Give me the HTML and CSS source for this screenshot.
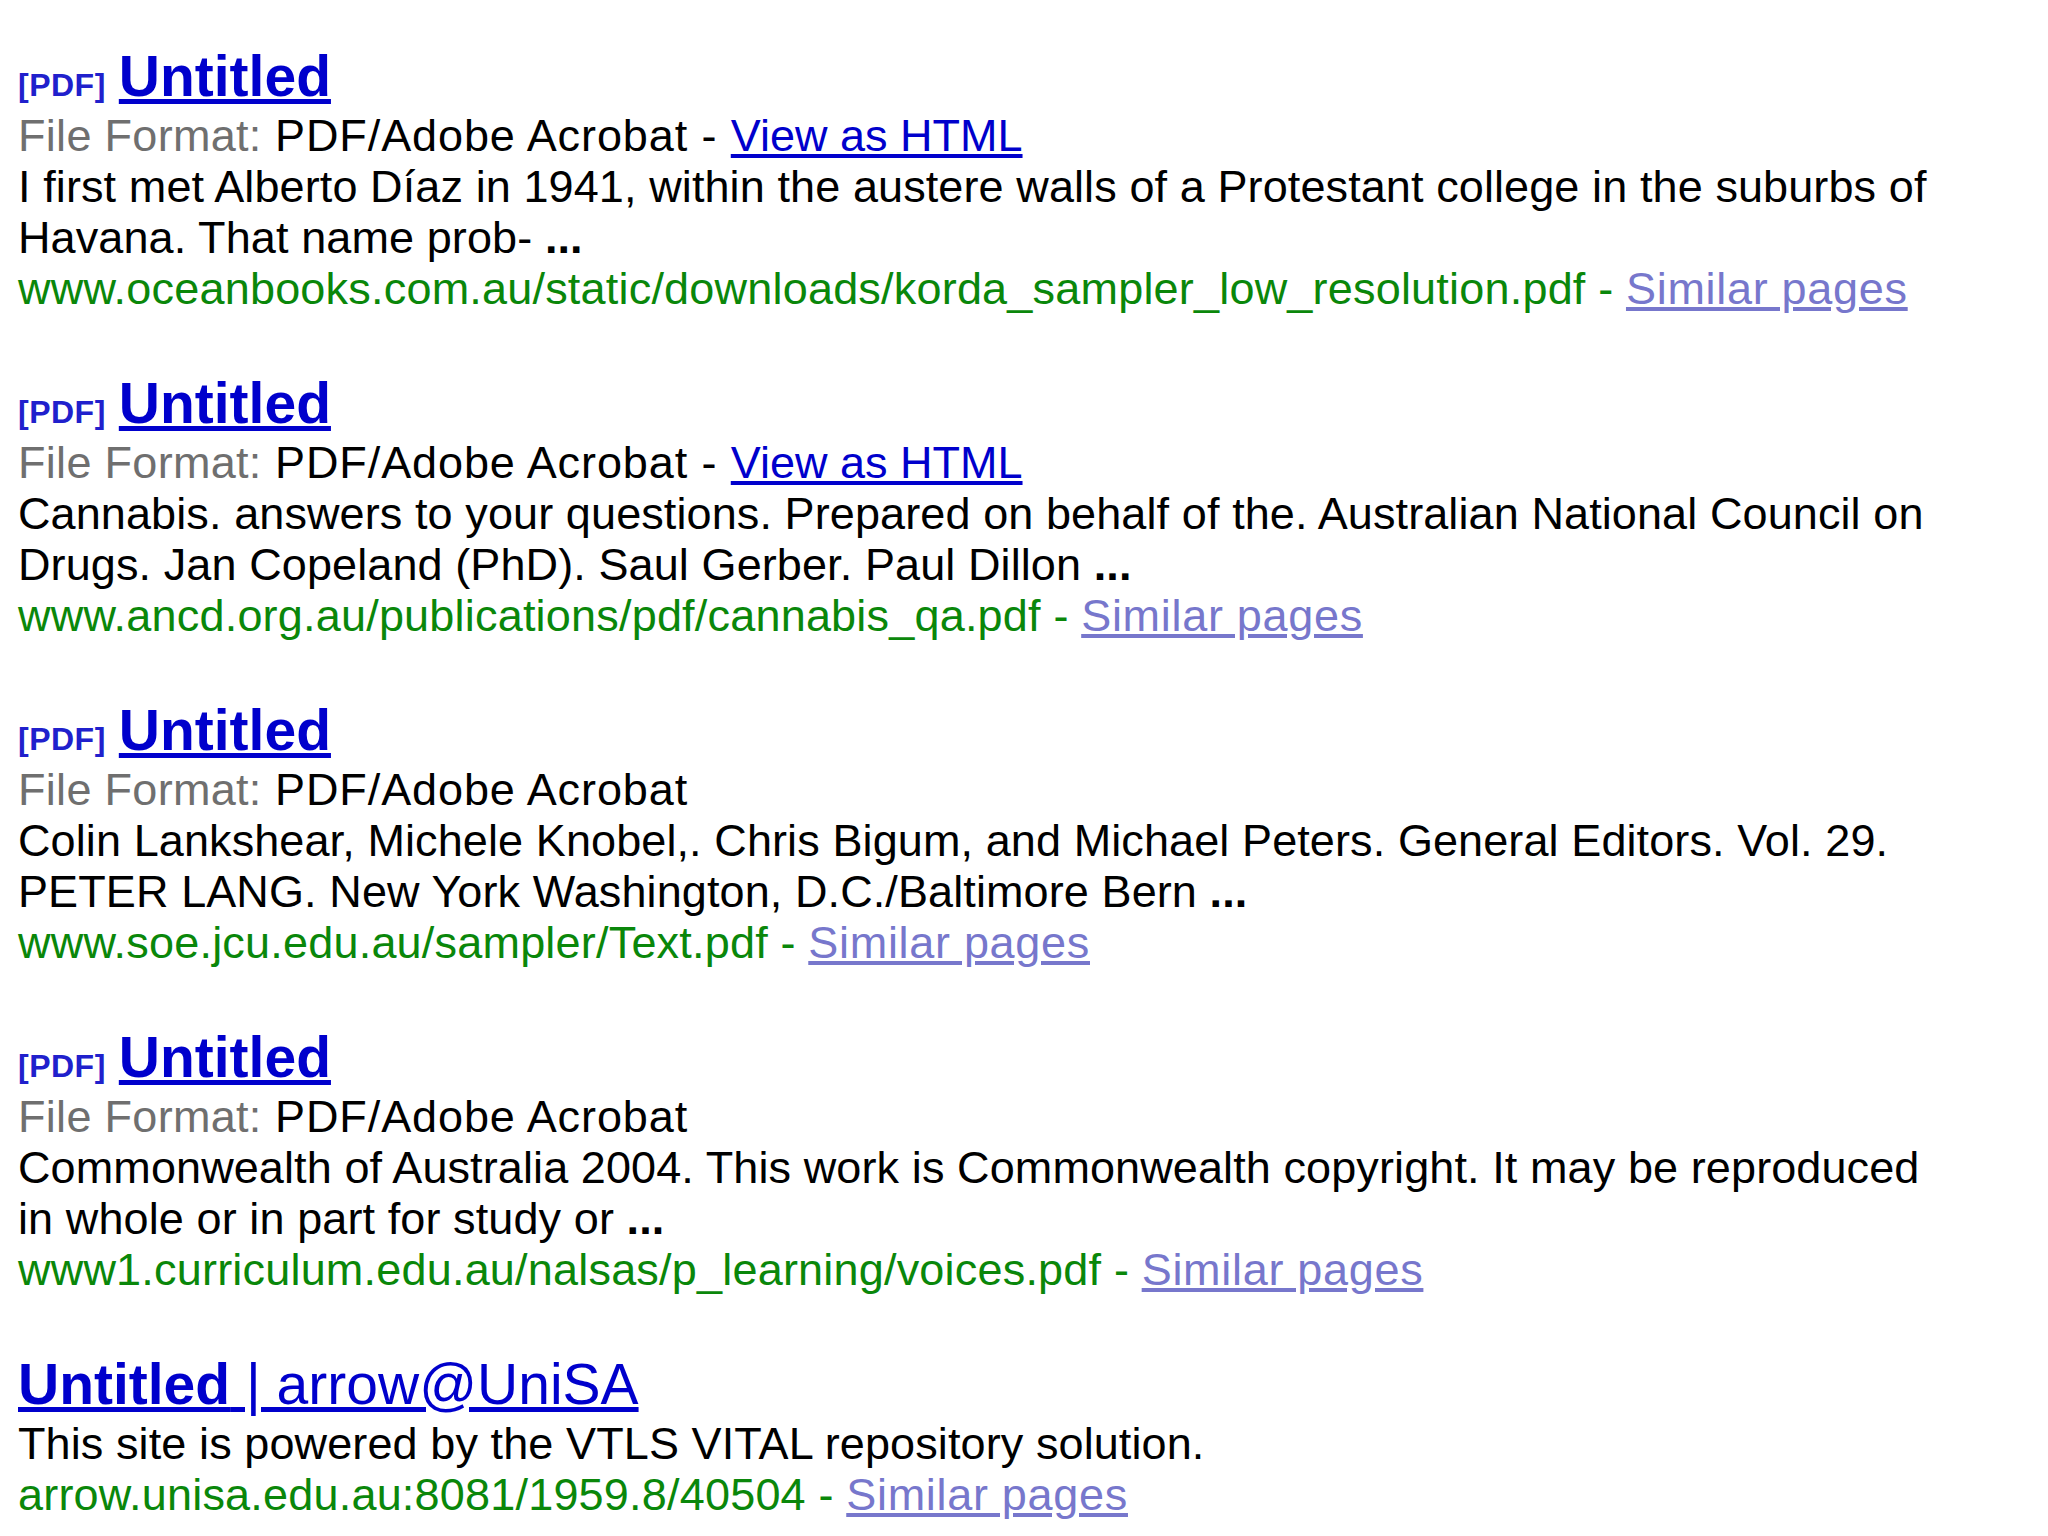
FILE: index.html
```html
<!DOCTYPE html>
<html lang="en">
<head>
<meta charset="utf-8">
<title>Untitled - results</title>
<link rel="stylesheet" href="styles.css">
</head>
<body>
<div class="results">
  <div class="result">
    <h2 class="r"><span class="tag">[PDF]</span><a class="title" href="#">Untitled</a></h2>
    <div class="s">
      <div class="ff"><span class="f">File Format:</span> PDF/Adobe Acrobat - <a class="link" href="#">View as HTML</a></div>
      <div class="snip">I first met Alberto Díaz in 1941, within the austere walls of a Protestant college in the suburbs of Havana. That name prob- <b>...</b></div>
      <div class="u"><span class="url">www.oceanbooks.com.au/static/downloads/korda_sampler_low_resolution.pdf -</span> <a class="fl" href="#">Similar pages</a></div>
    </div>
  </div>
  <div class="result">
    <h2 class="r"><span class="tag">[PDF]</span><a class="title" href="#">Untitled</a></h2>
    <div class="s">
      <div class="ff"><span class="f">File Format:</span> PDF/Adobe Acrobat - <a class="link" href="#">View as HTML</a></div>
      <div class="snip">Cannabis. answers to your questions. Prepared on behalf of the. Australian National Council on Drugs. Jan Copeland (PhD). Saul Gerber. Paul Dillon <b>...</b></div>
      <div class="u"><span class="url">www.ancd.org.au/publications/pdf/cannabis_qa.pdf -</span> <a class="fl" href="#">Similar pages</a></div>
    </div>
  </div>
  <div class="result">
    <h2 class="r"><span class="tag">[PDF]</span><a class="title" href="#">Untitled</a></h2>
    <div class="s">
      <div class="ff"><span class="f">File Format:</span> PDF/Adobe Acrobat</div>
      <div class="snip">Colin Lankshear, Michele Knobel,. Chris Bigum, and Michael Peters. General Editors. Vol. 29. PETER LANG. New York Washington, D.C./Baltimore Bern <b>...</b></div>
      <div class="u"><span class="url">www.soe.jcu.edu.au/sampler/Text.pdf -</span> <a class="fl" href="#">Similar pages</a></div>
    </div>
  </div>
  <div class="result">
    <h2 class="r"><span class="tag">[PDF]</span><a class="title" href="#">Untitled</a></h2>
    <div class="s">
      <div class="ff"><span class="f">File Format:</span> PDF/Adobe Acrobat</div>
      <div class="snip">Commonwealth of Australia 2004. This work is Commonwealth copyright. It may be reproduced in whole or in part for study or <b>...</b></div>
      <div class="u"><span class="url">www1.curriculum.edu.au/nalsas/p_learning/voices.pdf -</span> <a class="fl" href="#">Similar pages</a></div>
    </div>
  </div>
  <div class="result">
    <h2 class="r"><a class="title" href="#"><b>Untitled</b> | arrow@UniSA</a></h2>
    <div class="s">
      <div class="snip">This site is powered by the VTLS VITAL repository solution.</div>
      <div class="u"><span class="url">arrow.unisa.edu.au:8081/1959.8/40504 -</span> <a class="fl" href="#">Similar pages</a></div>
    </div>
  </div>
</div>
</body>
</html>
```

FILE: styles.css
```css
html, body {
  margin: 0;
  padding: 0;
  background: #ffffff;
}

body {
  font-family: "Liberation Sans", Arial, sans-serif;
  color: #000000;
}

.results {
  padding: 46px 0 0 18px;
  width: 1932px;
  display: flex;
  flex-direction: column;
  gap: 59px;
}

.r {
  margin: 0 0 4px 0;
  font-size: 57px;
  line-height: 60px;
  font-weight: normal;
}

.tag {
  font-size: 32px;
  line-height: 32px;
  font-weight: bold;
  letter-spacing: 0.5px;
  color: #2020cc;
  margin-right: 13px;
}

.title {
  color: #0000cc;
  text-decoration: underline;
}

.r .tag + .title {
  font-weight: bold;
}

.title b {
  font-weight: bold;
}

.s {
  font-size: 45px;
  line-height: 51px;
}

.snip {
  letter-spacing: 0.1px;
}

.ff {
  letter-spacing: 0.9px;
}

.s b {
  font-weight: bold;
}

.f {
  color: #6f6f6f;
  letter-spacing: 0.3px;
}

.link {
  color: #0000cc;
  text-decoration: underline;
  letter-spacing: 0;
}

.url {
  color: #0a870a;
  letter-spacing: 0.2px;
}

.fl {
  color: #7777cc;
  text-decoration: underline;
  letter-spacing: 0.7px;
  white-space: nowrap;
}
```
